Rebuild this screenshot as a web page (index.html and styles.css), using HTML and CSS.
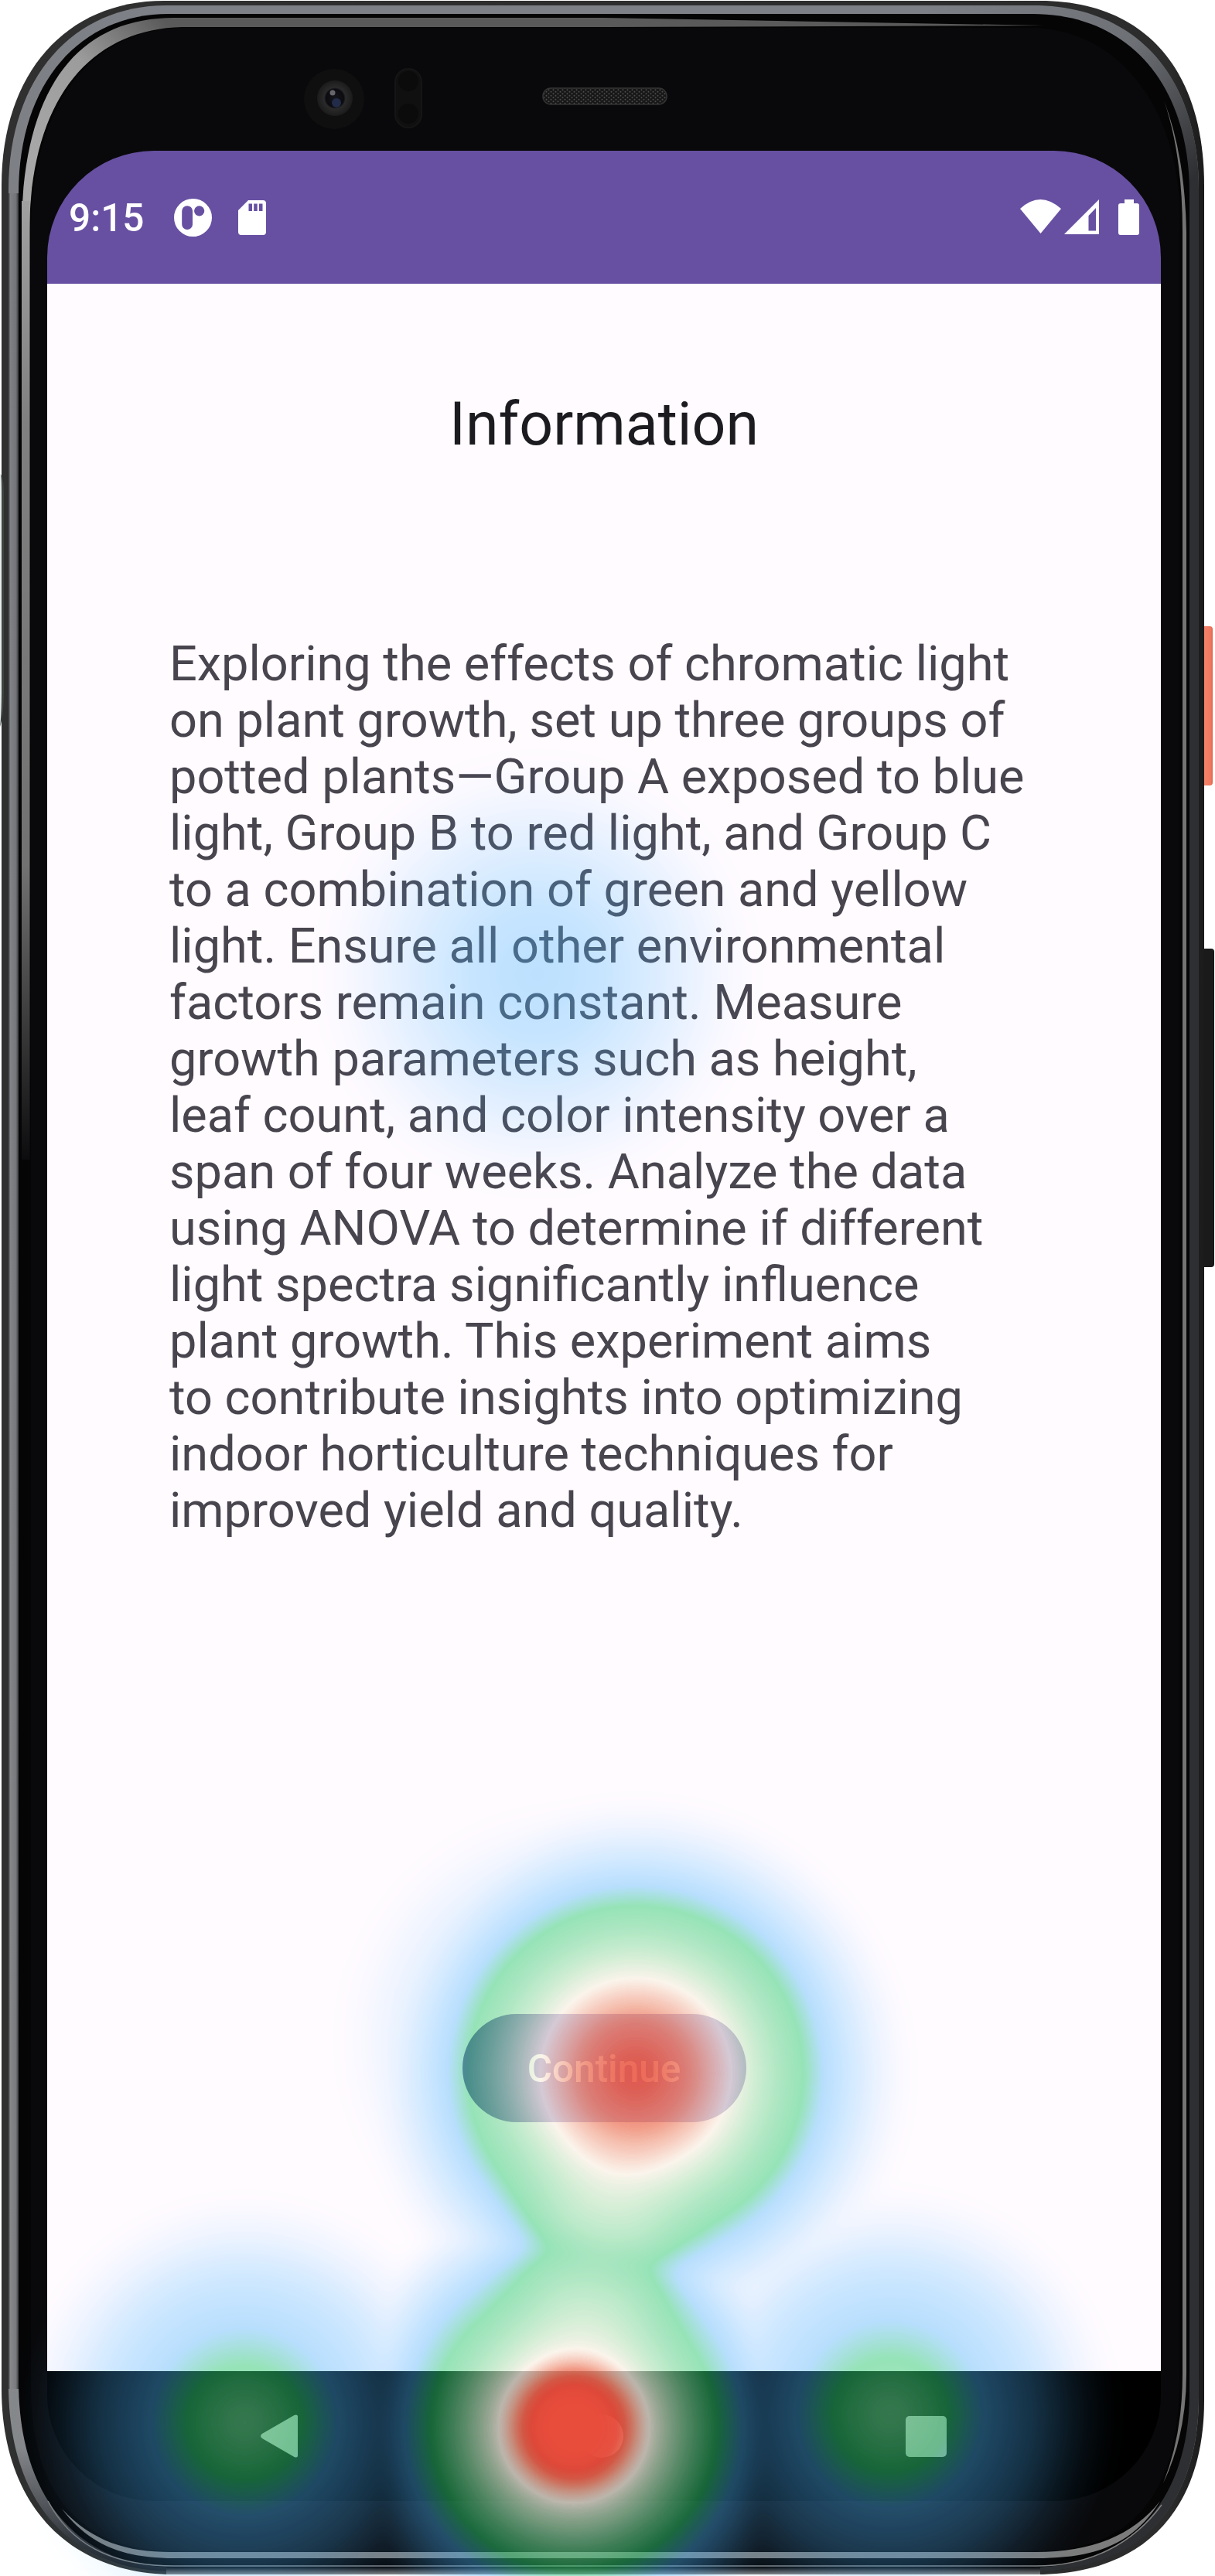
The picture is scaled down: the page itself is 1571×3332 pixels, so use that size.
FILE: index.html
```html
<!DOCTYPE html>
<html lang="en">
<head>
<meta charset="utf-8">
<title>Information</title>
<link rel="stylesheet" href="styles.css">
</head>
<body>
<div class="stage">
  <svg class="frame" viewBox="0 0 1571 3332" aria-hidden="true">
    <defs>
      <linearGradient id="rim" x1="0" x2="1" y1="0" y2="0">
        <stop offset="0" stop-color="#2f302f"/><stop offset=".97" stop-color="#2b2c2b"/><stop offset="1" stop-color="#1a1b1a"/>
      </linearGradient>
      <linearGradient id="steel" gradientUnits="userSpaceOnUse" x1="0" x2="0" y1="0" y2="3332">
        <stop offset="0" stop-color="#7d8086"/><stop offset=".1" stop-color="#7e8085"/><stop offset=".95" stop-color="#86888b"/><stop offset=".99" stop-color="#2a2b2f"/><stop offset="1" stop-color="#15161a"/>
      </linearGradient>
      <linearGradient id="steelR" gradientUnits="userSpaceOnUse" x1="1200" x2="1556" y1="0" y2="360">
        <stop offset="0" stop-color="#2d2f32" stop-opacity="0"/><stop offset=".45" stop-color="#2d2f32" stop-opacity=".2"/><stop offset=".8" stop-color="#2d2f32"/>
      </linearGradient>
      <linearGradient id="glow" gradientUnits="userSpaceOnUse" x1="28" x2="210" y1="200" y2="24">
        <stop offset="0" stop-color="#a8a8a8"/><stop offset=".55" stop-color="#9c9c9c"/><stop offset="1" stop-color="#5a5a5a"/>
      </linearGradient>
      <linearGradient id="down" gradientUnits="userSpaceOnUse" x1="0" x2="0" y1="230" y2="1500">
        <stop offset="0" stop-color="#a4a4a4"/><stop offset=".25" stop-color="#808080"/><stop offset=".7" stop-color="#727272"/><stop offset="1" stop-color="#0c0c0e"/>
      </linearGradient>
      <linearGradient id="foot" x1="0" x2="0" y1="0" y2="1">
        <stop offset="0" stop-color="#0a0a0c"/><stop offset="1" stop-color="#858585"/>
      </linearGradient>
      <linearGradient id="shade" gradientUnits="userSpaceOnUse" x1="11" x2="27" y1="0" y2="0">
        <stop offset="0" stop-color="#000" stop-opacity=".5"/><stop offset=".15" stop-color="#000" stop-opacity="0"/><stop offset=".6" stop-color="#000" stop-opacity=".1"/><stop offset="1" stop-color="#000" stop-opacity=".95"/>
      </linearGradient>
      <radialGradient id="lens"><stop offset="0" stop-color="#15151c"/><stop offset=".5" stop-color="#0b0b10"/><stop offset=".6" stop-color="#2a2a2b"/><stop offset="1" stop-color="#1b1b1c"/></radialGradient>
      <linearGradient id="key" x1="0" x2="1" y1="0" y2="0"><stop offset="0" stop-color="#d95f48"/><stop offset=".35" stop-color="#f4826a"/><stop offset=".8" stop-color="#f07a61"/><stop offset="1" stop-color="#e2644b"/></linearGradient>
      <pattern id="mesh" width="6" height="5" patternUnits="userSpaceOnUse"><rect width="6" height="5" fill="#171717"/><circle cx="1.5" cy="1.2" r="1" fill="#4c4c4c"/><circle cx="4.5" cy="3.7" r="1" fill="#4c4c4c"/></pattern>
    </defs>
    <rect x="1552" y="810" width="16" height="206" rx="4" fill="url(#key)"/>
    <rect x="1552" y="1227" width="18" height="412" rx="4" fill="#1a1a1a"/>
    <path d="M212 1H1345C1480 1 1557 90 1557 240V3105C1557 3245 1480 3330 1340 3330H225C85 3330 2 3235 2 3090V240C2 95 85 1 212 1Z" fill="url(#rim)"/>
    <path d="M215 7H1335C1470 7 1550 100 1550 245V3100C1550 3240 1475 3326 1335 3326H225C90 3326 11 3235 11 3085V245C11 100 95 7 215 7Z" fill="url(#steel)"/>
    <path d="M1200 7H1335C1470 7 1550 100 1550 245V3100C1550 3240 1475 3326 1335 3326H1200Z" fill="url(#steelR)"/>
    <path d="M11 250H27V3090H11Z" fill="url(#shade)"/>
    <path d="M218 18H1335C1460 18 1538 110 1538 250V3095C1538 3230 1465 3321 1330 3321H230C100 3321 24 3230 24 3080V250C24 105 105 18 218 18Z" fill="#050506"/>
    <path d="M215 3321H1345V3330H215Z" fill="url(#foot)"/>
    <path d="M62 3235C90 3288 140 3319 225 3319H1340C1410 3319 1465 3290 1502 3240" fill="none" stroke="#808080" stroke-width="1.5"/>
    <path d="M225 23H780L1350 33 780 35H235C115 38 39 130 38 300H28C28 115 100 23 225 23Z" fill="url(#glow)"/>
    <path d="M28 260H38.500V1500H28Z" fill="url(#down)"/>
    <path d="M1505 130Q1529 200 1529 300V3070Q1529 3150 1504 3212Q1534 3150 1534 3070V300Q1532 200 1505 130Z" fill="#747474"/>
    <path d="M80 3245C120 3288 165 3301 220 3301H1340C1410 3301 1465 3280 1500 3235C1465 3292 1415 3309 1340 3309H225C160 3309 115 3292 80 3245Z" fill="#7c7c7c"/>
    <path d="M235 36H1340C1450 42 1518 140 1525 260V3080C1525 3230 1460 3300 1340 3300H225C105 3300 40 3225 40 3090V290C44 130 120 38 235 36Z" fill="#09090b"/>
    <ellipse cx="432" cy="128" rx="39" ry="39" fill="#0f0f10"/>
    <circle cx="433" cy="127" r="23" fill="url(#lens)"/>
    <circle cx="430" cy="120" r="3.500" fill="#66666b"/><circle cx="435" cy="133" r="6" fill="#222b48"/>
    <rect x="511" y="89" width="34" height="76" rx="17" fill="#101011" stroke="#151516" stroke-width="2"/>
    <circle cx="528" cy="105" r="13" fill="#0b0b0c"/><circle cx="528" cy="147" r="13" fill="#0b0b0c"/>
    <rect x="702" y="114" width="160" height="21" rx="10" fill="url(#mesh)" stroke="#333" stroke-width="1.5"/>
    <path d="M0 613Q5 616 5 640V890Q5 925 0 940Z" fill="#3d4541"/><path d="M0 613H1Q2 616 2 640V890Q2 925 0 940Z" fill="#e8ebe9"/>
  </svg>

  <main class="screen">
    <header class="status">
      <span class="clock">9:15</span>
      <svg class="app-icon" viewBox="0 0 48 48"><path fill="#fff" fill-rule="evenodd" d="M24 0a24 24 0 1 1 0 48a24 24 0 1 1 0-48ZM16.500 9a6.500 6.500 0 0 0-6.500 6.500v17a6.500 6.500 0 0 0 13.500 0v-17a6.500 6.500 0 0 0-7-6.500ZM32 9a6.500 6.500 0 1 0 0 13a6.500 6.500 0 1 0 0-13Z"/></svg>
      <svg class="sd-icon" viewBox="0 0 36 45"><path fill="#fff" fill-rule="evenodd" d="M13 0H32Q36 0 36 4V41Q36 45 32 45H4Q0 45 0 41V13ZM13.500 4.500V14H18V4.500ZM20.200 4.500V14H24.700V4.500ZM27 4.500V14H31.500V4.500Z"/></svg>
      <svg class="signals" viewBox="0 0 154 46"><g fill="#fff"><path d="M0 12Q26-12 53 12L26.500 44Z"/><path fill-rule="evenodd" d="M102 0V45H57ZM98 11L88.500 21V40.500H98Z"/><path d="M135 0H147V5H151Q154 5 154 8V43Q154 46 151 46H130Q127 46 127 43V8Q127 5 130 5H135Z"/></g></svg>
    </header>
    <section class="content">
      <h1 class="title">Information</h1>
      <p class="text">Exploring the effects of chromatic light<br>on plant growth, set up three groups of<br>potted plants—Group A exposed to blue<br>light, Group B to red light, and Group C<br>to a combination of green and yellow<br>light. Ensure all other environmental<br>factors remain constant. Measure<br>growth parameters such as height,<br>leaf count, and color intensity over a<br>span of four weeks. Analyze the data<br>using ANOVA to determine if different<br>light spectra significantly influence<br>plant growth. This experiment aims<br>to contribute insights into optimizing<br>indoor horticulture techniques for<br>improved yield and quality.</p>
      <button class="continue">Continue</button>
    </section>
    <nav class="nav">
      <svg viewBox="0 0 50 58"><path d="M2 26L45 1Q50-1 50 4V54Q50 59 45 57L2 32Q-2 29 2 26Z" fill="#b4b4b4"/></svg>
      <svg viewBox="0 0 56 56"><circle cx="28" cy="28" r="28" fill="#b4b4b4"/></svg>
      <svg viewBox="0 0 53 53"><rect width="53" height="53" rx="5" fill="#a8a8a8"/></svg>
    </nav>
  </main>

  <svg class="heat" viewBox="0 0 1571 3332" aria-hidden="true">
    <defs>
      <!-- Grey level is the attention level: it picks both the colour and its opacity. -->
      <filter id="ramp" filterUnits="userSpaceOnUse" x="0" y="0" width="1571" height="3332" color-interpolation-filters="sRGB">
        <feGaussianBlur in="SourceGraphic" stdDeviation="12" result="soft"/>
        <feColorMatrix in="soft" type="matrix" values="1 0 0 0 0  0 1 0 0 0  0 0 1 0 0  0 0 0 0 1" result="level"/>
        <feComponentTransfer in="level" result="hue">
          <feFuncR type="table" tableValues=".30 .30 .30 .30 .30 .30 .30 .30 .30 .24 .18 .34 .50 .66 .82 .98 .96 .94 .92 .91 .91"/>
          <feFuncG type="table" tableValues=".71 .71 .71 .71 .71 .71 .71 .71 .71 .75 .80 .83 .86 .89 .92 .95 .75 .55 .38 .30 .30"/>
          <feFuncB type="table" tableValues="1 1 1 1 1 1 1 1 .98 .71 .44 .53 .62 .71 .80 .90 .68 .46 .30 .235 .235"/>
        </feComponentTransfer>
        <feColorMatrix in="level" type="matrix" values="0 0 0 0 0  0 0 0 0 0  0 0 0 0 0  1 0 0 0 0" result="mask"/>
        <feComposite in="hue" in2="mask" operator="in"/>
      </filter>
      <radialGradient id="small">
        <stop offset="0" stop-color="#929292"/><stop offset=".26" stop-color="#808080"/><stop offset=".42" stop-color="#666"/><stop offset=".65" stop-color="#444"/><stop offset=".85" stop-color="#161616"/><stop offset="1" stop-color="#000"/>
      </radialGradient>
      <radialGradient id="text">
        <stop offset="0" stop-color="#626262"/><stop offset=".3" stop-color="#505050"/><stop offset=".6" stop-color="#2a2a2a"/><stop offset=".85" stop-color="#0b0b0b"/><stop offset="1" stop-color="#000"/>
      </radialGradient>
      <radialGradient id="halo">
        <stop offset="0" stop-color="#4c4c4c"/><stop offset=".6" stop-color="#303030"/><stop offset=".8" stop-color="#151515"/><stop offset=".9" stop-color="#080808"/><stop offset="1" stop-color="#000"/>
      </radialGradient>
      <radialGradient id="bridge">
        <stop offset="0" stop-color="#fff"/><stop offset=".4" stop-color="#fff" stop-opacity=".75"/><stop offset=".75" stop-color="#fff" stop-opacity=".2"/><stop offset="1" stop-color="#fff" stop-opacity="0"/>
      </radialGradient>
      <radialGradient id="home">
        <stop offset="0" stop-color="#fff"/><stop offset=".16" stop-color="#fff"/><stop offset=".2" stop-color="#ededed"/><stop offset=".31" stop-color="#bfbfbf"/><stop offset=".6" stop-color="#808080"/><stop offset=".72" stop-color="#666"/><stop offset=".87" stop-color="#2e2e2e"/><stop offset="1" stop-color="#000"/>
      </radialGradient>
      <radialGradient id="cta">
        <stop offset="0" stop-color="#ececec"/><stop offset=".2" stop-color="#dadada"/><stop offset=".355" stop-color="#bfbfbf"/><stop offset=".62" stop-color="#808080"/><stop offset=".69" stop-color="#666"/><stop offset=".8" stop-color="#3a3a3a"/><stop offset=".9" stop-color="#161616"/><stop offset="1" stop-color="#000"/>
      </radialGradient>
    </defs>
    <g filter="url(#ramp)">
      <rect width="1571" height="3332" fill="#000"/>
      <circle class="peak" cx="695" cy="1260" r="285" fill="url(#text)"/>
      <circle class="peak" cx="316" cy="3133" r="290" fill="url(#small)"/>
      <circle class="peak" cx="1151" cy="3123" r="290" fill="url(#small)"/>
      <circle class="peak" cx="740" cy="2640" r="303" fill="url(#halo)"/>
      <circle class="peak" cx="822" cy="2682" r="353" fill="url(#cta)"/>
      <circle class="peak" cx="742" cy="3140" r="308" fill="url(#home)"/>
      <circle class="trace" cx="770" cy="2922" r="160" fill="url(#bridge)" opacity=".26"/>
    </g>
  </svg>
</div>
</body>
</html>
```

FILE: styles.css
```css
body {
  margin: 0;
  background: #fff;
  font-family: Roboto, sans-serif;
}

.stage {
  position: relative;
  box-sizing: border-box;
  width: 1571px;
  height: 3332px;
  padding: 195px 70px 97px 61px;
  overflow: hidden;
}

.frame,
.heat {
  position: absolute;
  inset: 0;
  width: 1571px;
  height: 3332px;
}

.heat {
  pointer-events: none;
}

.peak {
  mix-blend-mode: lighten;
}

.trace {
  mix-blend-mode: screen;
}

.screen {
  position: relative;
  display: flex;
  flex-direction: column;
  width: 1440px;
  height: 3040px;
  overflow: hidden;
  border-radius: 138px;
}

.status {
  display: flex;
  align-items: center;
  box-sizing: border-box;
  height: 172px;
  padding: 0 28px 0 28px;
  background: #6750a2;
}

.clock {
  width: 136px;
  padding-top: 2px;
  color: #fff;
  font-size: 49.5px;
  font-weight: 500;
  line-height: 60px;
}

.app-icon {
  width: 49px;
  height: 49px;
}

.sd-icon {
  width: 36px;
  height: 45px;
  margin-left: 34px;
}

.signals {
  width: 154px;
  height: 46px;
  margin-left: auto;
}

.content {
  display: flex;
  flex: 1;
  flex-direction: column;
  align-items: center;
  background: #fffbff;
}

.title {
  margin: 134px 0 0;
  color: #1c1b1f;
  font-size: 77px;
  font-weight: 400;
  line-height: 96px;
}

.text {
  width: 1124px;
  margin: 225px 0 0;
  color: #49454f;
  font-size: 63.05px;
  line-height: 73px;
  white-space: nowrap;
}

.continue {
  width: 367px;
  height: 140px;
  margin: auto 0 322px;
  padding: 2px 0 0;
  border: 0;
  border-radius: 70px;
  background: #6750a4;
  color: #fff;
  font: 500 49.500px Roboto, sans-serif;
}

.nav {
  display: flex;
  align-items: center;
  justify-content: space-between;
  box-sizing: border-box;
  height: 168px;
  padding: 0 277px 0 276px;
  background: #000;
}

.nav svg {
  height: 56px;
}

.nav svg:last-child {
  height: 53px;
}
```
